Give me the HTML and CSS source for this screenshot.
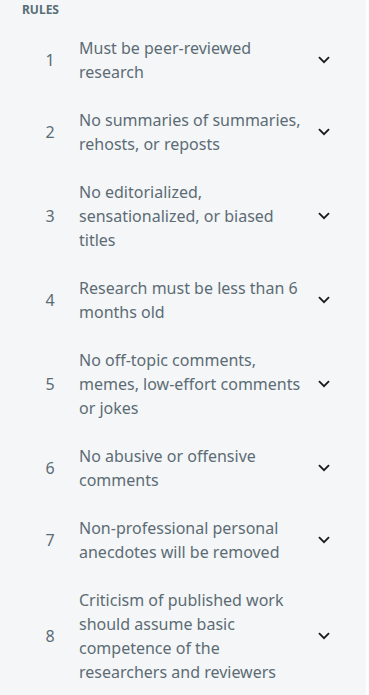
FILE: index.html
```html
<!DOCTYPE html>
<html lang="en">
<head>
    <meta charset="UTF-8">
    <meta name="viewport" content="width=device-width, initial-scale=1.0">
    <title>Rules</title>
    <link rel="stylesheet" href="styles.css">
</head>
<body>
    <div class="rules-panel">
        <h2 class="rules-title">Rules</h2>

        <!-- One row per rule: number, text, expand chevron -->
        <div class="rule">
            <span class="rule-num">1</span>
            <span class="rule-text">Must be peer-reviewed research</span>
            <span class="rule-caret"><svg viewBox="0 0 12 8" width="12" height="8"><path d="M1 1.2l5 5 5-5"/></svg></span>
        </div>
        <div class="rule">
            <span class="rule-num">2</span>
            <span class="rule-text">No summaries of summaries, rehosts, or reposts</span>
            <span class="rule-caret"><svg viewBox="0 0 12 8" width="12" height="8"><path d="M1 1.2l5 5 5-5"/></svg></span>
        </div>
        <div class="rule">
            <span class="rule-num">3</span>
            <span class="rule-text">No editorialized, sensationalized, or biased titles</span>
            <span class="rule-caret"><svg viewBox="0 0 12 8" width="12" height="8"><path d="M1 1.2l5 5 5-5"/></svg></span>
        </div>
        <div class="rule">
            <span class="rule-num">4</span>
            <span class="rule-text">Research must be less than 6 months old</span>
            <span class="rule-caret"><svg viewBox="0 0 12 8" width="12" height="8"><path d="M1 1.2l5 5 5-5"/></svg></span>
        </div>
        <div class="rule">
            <span class="rule-num">5</span>
            <span class="rule-text">No off-topic comments, memes, low-effort comments or jokes</span>
            <span class="rule-caret"><svg viewBox="0 0 12 8" width="12" height="8"><path d="M1 1.2l5 5 5-5"/></svg></span>
        </div>
        <div class="rule">
            <span class="rule-num">6</span>
            <span class="rule-text">No abusive or offensive comments</span>
            <span class="rule-caret"><svg viewBox="0 0 12 8" width="12" height="8"><path d="M1 1.2l5 5 5-5"/></svg></span>
        </div>
        <div class="rule">
            <span class="rule-num">7</span>
            <span class="rule-text">Non-professional personal anecdotes will be removed</span>
            <span class="rule-caret"><svg viewBox="0 0 12 8" width="12" height="8"><path d="M1 1.2l5 5 5-5"/></svg></span>
        </div>
        <div class="rule">
            <span class="rule-num">8</span>
            <span class="rule-text">Criticism of published work should assume basic competence of the researchers and reviewers</span>
            <span class="rule-caret"><svg viewBox="0 0 12 8" width="12" height="8"><path d="M1 1.2l5 5 5-5"/></svg></span>
        </div>
    </div>
</body>
</html>
```

FILE: styles.css
```css
body {
    margin: 0;
    padding: 0;
    background-color: #fff;
    font-family: 'Noto Sans', 'Open Sans', sans-serif;
}

/* Sidebar panel */
.rules-panel {
    width: 366px;
    background-color: #f5f6f8;
    min-height: 100vh;
}

.rules-title {
    margin: 0;
    padding: 2px 0 6px 22px;
    font-size: 12px;
    line-height: 16px;
    font-weight: 700;
    text-transform: uppercase;
    color: #576f76;
}

/* Rule rows */
.rule {
    display: grid;
    grid-template-columns: 24px 1fr 24px;
    align-items: center;
    padding: 12px 30px 12px 38px;
}

.rule-num {
    text-align: center;
    font-size: 16px;
    line-height: 24px;
    color: #5c6c74;
}

.rule-text {
    margin-left: 17px;
    font-size: 16px;
    line-height: 24px;
    color: #5c6c74;
}

.rule-caret {
    display: flex;
    justify-content: center;
    align-items: center;
}

.rule-caret svg path {
    fill: none;
    stroke: #1a1a1b;
    stroke-width: 1.8;
}
```
